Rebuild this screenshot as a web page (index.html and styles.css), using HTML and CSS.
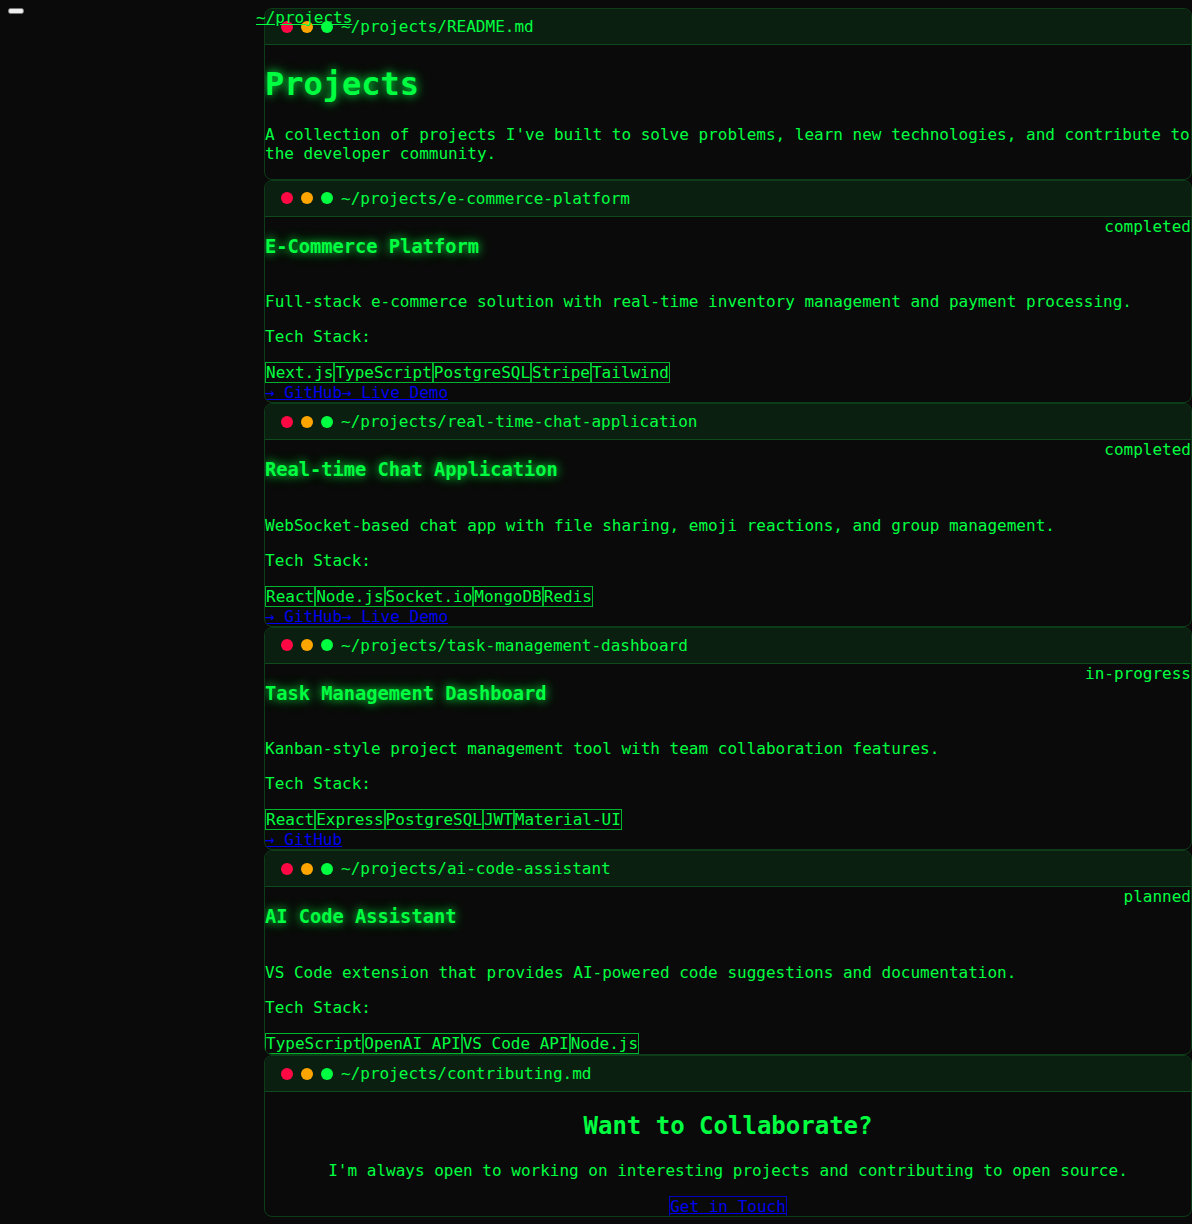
FILE: index.html
```
<!DOCTYPE html>
<html lang="en">
<head>
<meta charset="utf-8">
<title>~/projects</title>
<link rel="stylesheet" href="styles.css">
</head>
<body>
<div class="layout">
  <aside class="sidebar"><button class="menu-btn"></button></aside>
  <main class="main">
    <a class="crumb" href="#">~/projects</a>

    <section class="term">
      <div class="term-bar"><span class="dot red"></span><span class="dot amber"></span><span class="dot green"></span><span class="path">~/projects/README.md</span></div>
      <div class="term-body">
        <h1 class="glow">Projects</h1>
        <p>A collection of projects I've built to solve problems, learn new technologies, and contribute to the developer community.</p>
      </div>
    </section>

    <section class="term">
      <div class="term-bar"><span class="dot red"></span><span class="dot amber"></span><span class="dot green"></span><span class="path">~/projects/e-commerce-platform</span></div>
      <div class="term-body">
        <div class="row"><h3 class="glow">E-Commerce Platform</h3><span class="status">completed</span></div>
        <p>Full-stack e-commerce solution with real-time inventory management and payment processing.</p>
        <p>Tech Stack:</p>
        <div class="tags"><span class="tag">Next.js</span><span class="tag">TypeScript</span><span class="tag">PostgreSQL</span><span class="tag">Stripe</span><span class="tag">Tailwind</span></div>
        <div class="links"><a href="#">→ GitHub</a><a href="#">→ Live Demo</a></div>
      </div>
    </section>

    <section class="term">
      <div class="term-bar"><span class="dot red"></span><span class="dot amber"></span><span class="dot green"></span><span class="path">~/projects/real-time-chat-application</span></div>
      <div class="term-body">
        <div class="row"><h3 class="glow">Real-time Chat Application</h3><span class="status">completed</span></div>
        <p>WebSocket-based chat app with file sharing, emoji reactions, and group management.</p>
        <p>Tech Stack:</p>
        <div class="tags"><span class="tag">React</span><span class="tag">Node.js</span><span class="tag">Socket.io</span><span class="tag">MongoDB</span><span class="tag">Redis</span></div>
        <div class="links"><a href="#">→ GitHub</a><a href="#">→ Live Demo</a></div>
      </div>
    </section>

    <section class="term">
      <div class="term-bar"><span class="dot red"></span><span class="dot amber"></span><span class="dot green"></span><span class="path">~/projects/task-management-dashboard</span></div>
      <div class="term-body">
        <div class="row"><h3 class="glow">Task Management Dashboard</h3><span class="status">in-progress</span></div>
        <p>Kanban-style project management tool with team collaboration features.</p>
        <p>Tech Stack:</p>
        <div class="tags"><span class="tag">React</span><span class="tag">Express</span><span class="tag">PostgreSQL</span><span class="tag">JWT</span><span class="tag">Material-UI</span></div>
        <div class="links"><a href="#">→ GitHub</a></div>
      </div>
    </section>

    <section class="term">
      <div class="term-bar"><span class="dot red"></span><span class="dot amber"></span><span class="dot green"></span><span class="path">~/projects/ai-code-assistant</span></div>
      <div class="term-body">
        <div class="row"><h3 class="glow">AI Code Assistant</h3><span class="status">planned</span></div>
        <p>VS Code extension that provides AI-powered code suggestions and documentation.</p>
        <p>Tech Stack:</p>
        <div class="tags"><span class="tag">TypeScript</span><span class="tag">OpenAI API</span><span class="tag">VS Code API</span><span class="tag">Node.js</span></div>
      </div>
    </section>

    <section class="term">
      <div class="term-bar"><span class="dot red"></span><span class="dot amber"></span><span class="dot green"></span><span class="path">~/projects/contributing.md</span></div>
      <div class="term-body center">
        <h2>Want to Collaborate?</h2>
        <p>I'm always open to working on interesting projects and contributing to open source.</p>
        <a class="cta" href="#">Get in Touch</a>
      </div>
    </section>
  </main>
</div>
</body>
</html>
```

FILE: styles.css
```
html {
  background: #0a0a0a;
}

body {
  margin: 8px 0 8px 8px;
  background: #0a0a0a;
  color: #00ff41;
  font-family: "DejaVu Sans Mono", "Liberation Mono", monospace;
  font-size: 16px;
}

.layout {
  display: flex;
  align-items: flex-start;
}

.sidebar {
  width: 256px;
  flex: none;
}

.menu-btn {
  display: block;
}

.main {
  flex: 1;
  min-width: 0;
}

.crumb {
  position: absolute;
  top: 8px;
  left: 256px;
  color: #00ff41;
  line-height: 19px;
  z-index: 2;
}

.term {
  border: 1px solid #0d3d18;
  border-radius: 8px;
  overflow: hidden;
}

.term-bar {
  display: flex;
  align-items: center;
  gap: 8px;
  padding: 8px 16px;
  height: 19px;
  background: #0b1f10;
  border-bottom: 1px solid #0e4a1c;
}

.dot {
  width: 12px;
  height: 12px;
  border-radius: 50%;
  flex: none;
}

.dot.red { background: #ff0844; }
.dot.amber { background: #ffa500; }
.dot.green { background: #00ff41; }

.path {
  line-height: 19px;
}

.term-body h1 {
  font-size: 32px;
  line-height: 37px;
  margin: 21.44px 0;
}

.glow {
  text-shadow: 0 0 8px rgba(0, 255, 65, 0.8), 0 0 16px rgba(0, 255, 65, 0.4);
}

.row {
  display: flex;
  justify-content: space-between;
  align-items: flex-start;
}

.row h3 {
  font-size: 18.72px;
  line-height: 22.1px;
  margin: 18.72px 0;
}

.term-body p {
  margin: 16px 0;
}

.tags {
  display: flex;
}

.tag {
  border: 1px solid #00b52e;
}

.links {
  display: flex;
}

.links a {
  color: #0000ee;
}

.center {
  text-align: center;
}

.center h2 {
  font-size: 24px;
  line-height: 29px;
  margin: 19.92px 0;
}

.center p {
  margin: 16px 0 17px;
}

.cta {
  color: #0000ee;
  border: 1px solid #0000c0;
}
```
